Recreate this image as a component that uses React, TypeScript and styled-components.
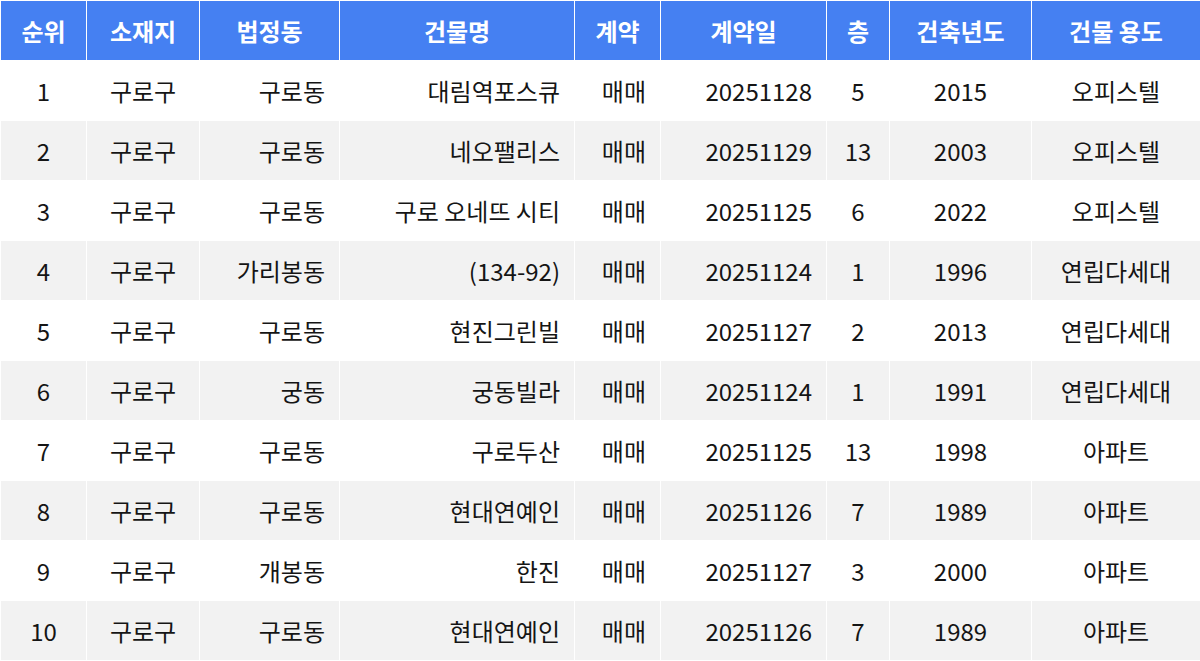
import styled, { createGlobalStyle } from 'styled-components'

const GlobalStyle = createGlobalStyle`
  html, body {
    margin: 0;
    padding: 0;
    background: #ffffff;
  }
  body {
    font-family: 'Noto Sans CJK KR', 'Noto Sans', sans-serif;
  }
`

type Align = 'left' | 'center' | 'right'

interface Column {
  key: string
  title: string
  width: number
  align: Align
}

const columns: Column[] = [
  { key: 'rank', title: '순위', width: 86, align: 'center' },
  { key: 'gu', title: '소재지', width: 113, align: 'center' },
  { key: 'dong', title: '법정동', width: 140, align: 'right' },
  { key: 'name', title: '건물명', width: 235, align: 'right' },
  { key: 'type', title: '계약', width: 86, align: 'right' },
  { key: 'date', title: '계약일', width: 166, align: 'right' },
  { key: 'floor', title: '층', width: 63, align: 'center' },
  { key: 'year', title: '건축년도', width: 142, align: 'center' },
  { key: 'use', title: '건물 용도', width: 169, align: 'center' },
]

const rows: string[][] = [
  ['1', '구로구', '구로동', '대림역포스큐', '매매', '20251128', '5', '2015', '오피스텔'],
  ['2', '구로구', '구로동', '네오팰리스', '매매', '20251129', '13', '2003', '오피스텔'],
  ['3', '구로구', '구로동', '구로 오네뜨 시티', '매매', '20251125', '6', '2022', '오피스텔'],
  ['4', '구로구', '가리봉동', '(134-92)', '매매', '20251124', '1', '1996', '연립다세대'],
  ['5', '구로구', '구로동', '현진그린빌', '매매', '20251127', '2', '2013', '연립다세대'],
  ['6', '구로구', '궁동', '궁동빌라', '매매', '20251124', '1', '1991', '연립다세대'],
  ['7', '구로구', '구로동', '구로두산', '매매', '20251125', '13', '1998', '아파트'],
  ['8', '구로구', '구로동', '현대연예인', '매매', '20251126', '7', '1989', '아파트'],
  ['9', '구로구', '개봉동', '한진', '매매', '20251127', '3', '2000', '아파트'],
  ['10', '구로구', '구로동', '현대연예인', '매매', '20251126', '7', '1989', '아파트'],
]

const StyledTable = styled.table`
  width: 1200px;
  table-layout: fixed;
  border-collapse: collapse;
  border-spacing: 0;
`

const StyledHeaderCell = styled.th<{ $width: number }>`
  width: ${({ $width }) => $width}px;
  height: 60px;
  padding: 0 12px;
  box-sizing: border-box;
  background: #4580f2;
  color: #ffffff;
  font-size: 24px;
  font-weight: 700;
  text-align: center;
  white-space: nowrap;
  border: 1px solid #ffffff;
`

const StyledRow = styled.tr<{ $striped: boolean }>`
  background: ${({ $striped }) => ($striped ? '#f2f2f2' : '#ffffff')};
`

const StyledCell = styled.td<{ $align: Align }>`
  height: 60px;
  padding: 0 14px;
  box-sizing: border-box;
  color: #151515;
  font-size: 24px;
  font-weight: 400;
  text-align: ${({ $align }) => $align};
  white-space: nowrap;
  border: 1px solid #ffffff;
`

export default function App() {
  return (
    <>
      <GlobalStyle />
      <StyledTable>
        <thead>
          <tr>
            {columns.map((col) => (
              <StyledHeaderCell key={col.key} $width={col.width}>
                {col.title}
              </StyledHeaderCell>
            ))}
          </tr>
        </thead>
        <tbody>
          {rows.map((row, i) => (
            <StyledRow key={i} $striped={i % 2 === 1}>
              {row.map((value, j) => (
                <StyledCell key={columns[j].key} $align={columns[j].align}>
                  {value}
                </StyledCell>
              ))}
            </StyledRow>
          ))}
        </tbody>
      </StyledTable>
    </>
  )
}
